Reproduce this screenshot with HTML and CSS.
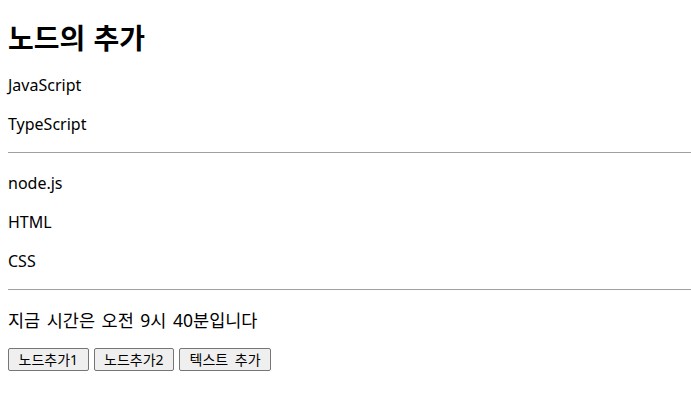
FILE: index.html
```html
<!DOCTYPE html>
<html lang="ko">
<head>
<meta charset="utf-8">
<title>노드의 추가</title>
<link rel="stylesheet" href="styles.css">
</head>
<body class="page">
<h1 class="title">노드의 추가</h1>
<p class="item">JavaScript</p>
<p class="item">TypeScript</p>
<hr class="rule">
<p class="item">node.js</p>
<p class="item">HTML</p>
<p class="item">CSS</p>
<hr class="rule">
<p class="item item-ko">지금 시간은 오전 9시 40분입니다</p>
<div class="actions">
<button class="btn" type="button">노드추가1</button>
<button class="btn" type="button">노드추가2</button>
<button class="btn" type="button">텍스트 추가</button>
</div>
</body>
</html>
```
FILE: styles.css
```css
html {
  margin: 0;
}
.page {
  margin: 0;
  padding: 0 0 8px 8px;
  font-family: "Noto Sans", "Noto Sans CJK KR", sans-serif;
  font-size: 16px;
  color: #000;
  background: #fff;
}
.title {
  font-size: 28px;
  font-weight: 700;
  margin: 20px 0 18px;
  line-height: 36px;
  word-spacing: 1px;
}
.item {
  margin: 16px 0;
  line-height: 23px;
}
.item-ko {
  font-size: 17.5px;
  word-spacing: 2px;
}
.rule {
  margin: 16px 0 19px;
  border: none;
  border-top: 1px solid #a0a0a0;
  height: 0;
}
.actions {
  display: flex;
  gap: 5px;
}
.btn {
  font-family: "Noto Sans", "Noto Sans CJK KR", sans-serif;
  font-size: 14px;
  font-weight: 400;
  padding: 0 9.5px;
  height: 23px;
  line-height: 20px;
  background: #efefef;
  border: 1px solid #767676;
  border-radius: 2px;
  color: #000;
  word-spacing: 3px;
}
```
